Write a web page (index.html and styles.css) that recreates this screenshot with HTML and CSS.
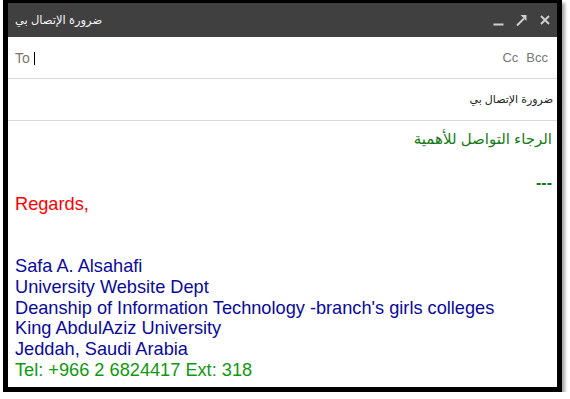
FILE: index.html
```html
<!DOCTYPE html>
<html>
<head>
<meta charset="utf-8">
<link rel="stylesheet" href="styles.css">
</head>
<body>
<div class="frame">
  <div class="titlebar">
    <span class="title" dir="rtl">ضرورة الإتصال بي</span>
    <div class="controls">
      <svg class="ico" width="12" height="12" viewBox="0 0 12 12"><rect x="0.5" y="9.5" width="10" height="2" fill="#cfcfcf"/></svg>
      <svg class="ico" width="12" height="12" viewBox="0 0 12 12"><path d="M1 11.5 L8 4.5" stroke="#cfcfcf" stroke-width="2" fill="none"/><path d="M4.5 1 H10.5 V7 Z" fill="#cfcfcf"/></svg>
      <svg class="ico" width="12" height="12" viewBox="0 0 12 12"><path d="M2 2 L10 10 M10 2 L2 10" stroke="#cfcfcf" stroke-width="2" fill="none"/></svg>
    </div>
  </div>
  <div class="row to-row">
    <span class="label to">To</span><span class="cursor"></span>
    <span class="spacer"></span>
    <span class="label">Cc</span><span class="label">Bcc</span>
  </div>
  <div class="row subject-row" dir="rtl">
    <span class="subject">ضرورة الإتصال بي</span>
  </div>
  <div class="body">
    <div class="line ar green-dark" dir="rtl">الرجاء التواصل للأهمية</div>
    <div class="line">&nbsp;</div>
    <div class="line green-dark right dash">---</div>
    <div class="line red">Regards,</div>
    <div class="line">&nbsp;</div>
    <div class="line">&nbsp;</div>
    <div class="line blue">Safa A. Alsahafi</div>
    <div class="line blue">University Website Dept</div>
    <div class="line blue">Deanship of Information Technology -branch's girls colleges</div>
    <div class="line blue">King AbdulAziz University</div>
    <div class="line blue">Jeddah, Saudi Arabia</div>
    <div class="line green">Tel: +966 2 6824417 Ext: 318</div>
  </div>
</div>
</body>
</html>
```
FILE: styles.css
```css
html, body {
  margin: 0;
  padding: 0;
  background: #ffffff;
}
body {
  font-family: "Liberation Sans", Arial, "DejaVu Sans", sans-serif;
}
.frame {
  margin-left: 3px;
  width: 549px;
  height: 384px;
  border-style: solid;
  border-color: #000;
  border-width: 3px 5px 5px 5px;
  box-shadow: 3px 3px 3px rgba(0, 0, 0, 0.35);
  background: #fff;
  display: flex;
  flex-direction: column;
  overflow: hidden;
}
.titlebar {
  height: 34px;
  flex: none;
  background: #404040;
  display: flex;
  align-items: center;
  padding: 0 6px 0 7px;
}
.title {
  color: #f4f4f4;
  font-size: 11.5px;
  font-weight: normal;
}
.controls {
  margin-left: auto;
  display: flex;
  align-items: center;
  gap: 11px;
}
.ico {
  display: block;
  width: 12px;
  height: 12px;
}
.row {
  flex: none;
  display: flex;
  align-items: center;
  border-bottom: 1px solid #d9d9d9;
  padding: 0 9px 0 7px;
}
.to-row {
  height: 41px;
}
.subject-row {
  height: 41px;
  padding: 0 4px 0 7px;
}
.label {
  color: #777;
  font-size: 13px;
  margin-right: 8px;
}
.label.to {
  color: #7d746b;
  font-size: 14px;
  margin-right: 0;
}
.label:last-child {
  margin-right: 0;
}
.cursor {
  display: block;
  width: 1px;
  height: 13px;
  background: #000;
  margin-left: 4px;
  margin-top: 1px;
}
.spacer {
  flex: 1;
}
.subject {
  font-size: 11px;
  color: #222;
}
.body {
  padding: 11px 5px 0 7px;
}
.line {
  font-size: 18.2px;
  line-height: 20.7px;
  white-space: nowrap;
}
.right {
  text-align: right;
}
.ar {
  text-align: right;
  font-size: 15px;
  margin-top: -3px;
  margin-bottom: 3px;
}
.dash {
  font-weight: bold;
  font-size: 16px;
}
.green-dark {
  color: #167a16;
}
.red {
  color: #ff0000;
}
.blue {
  color: #0a0a9c;
}
.green {
  color: #0f990f;
}
```
